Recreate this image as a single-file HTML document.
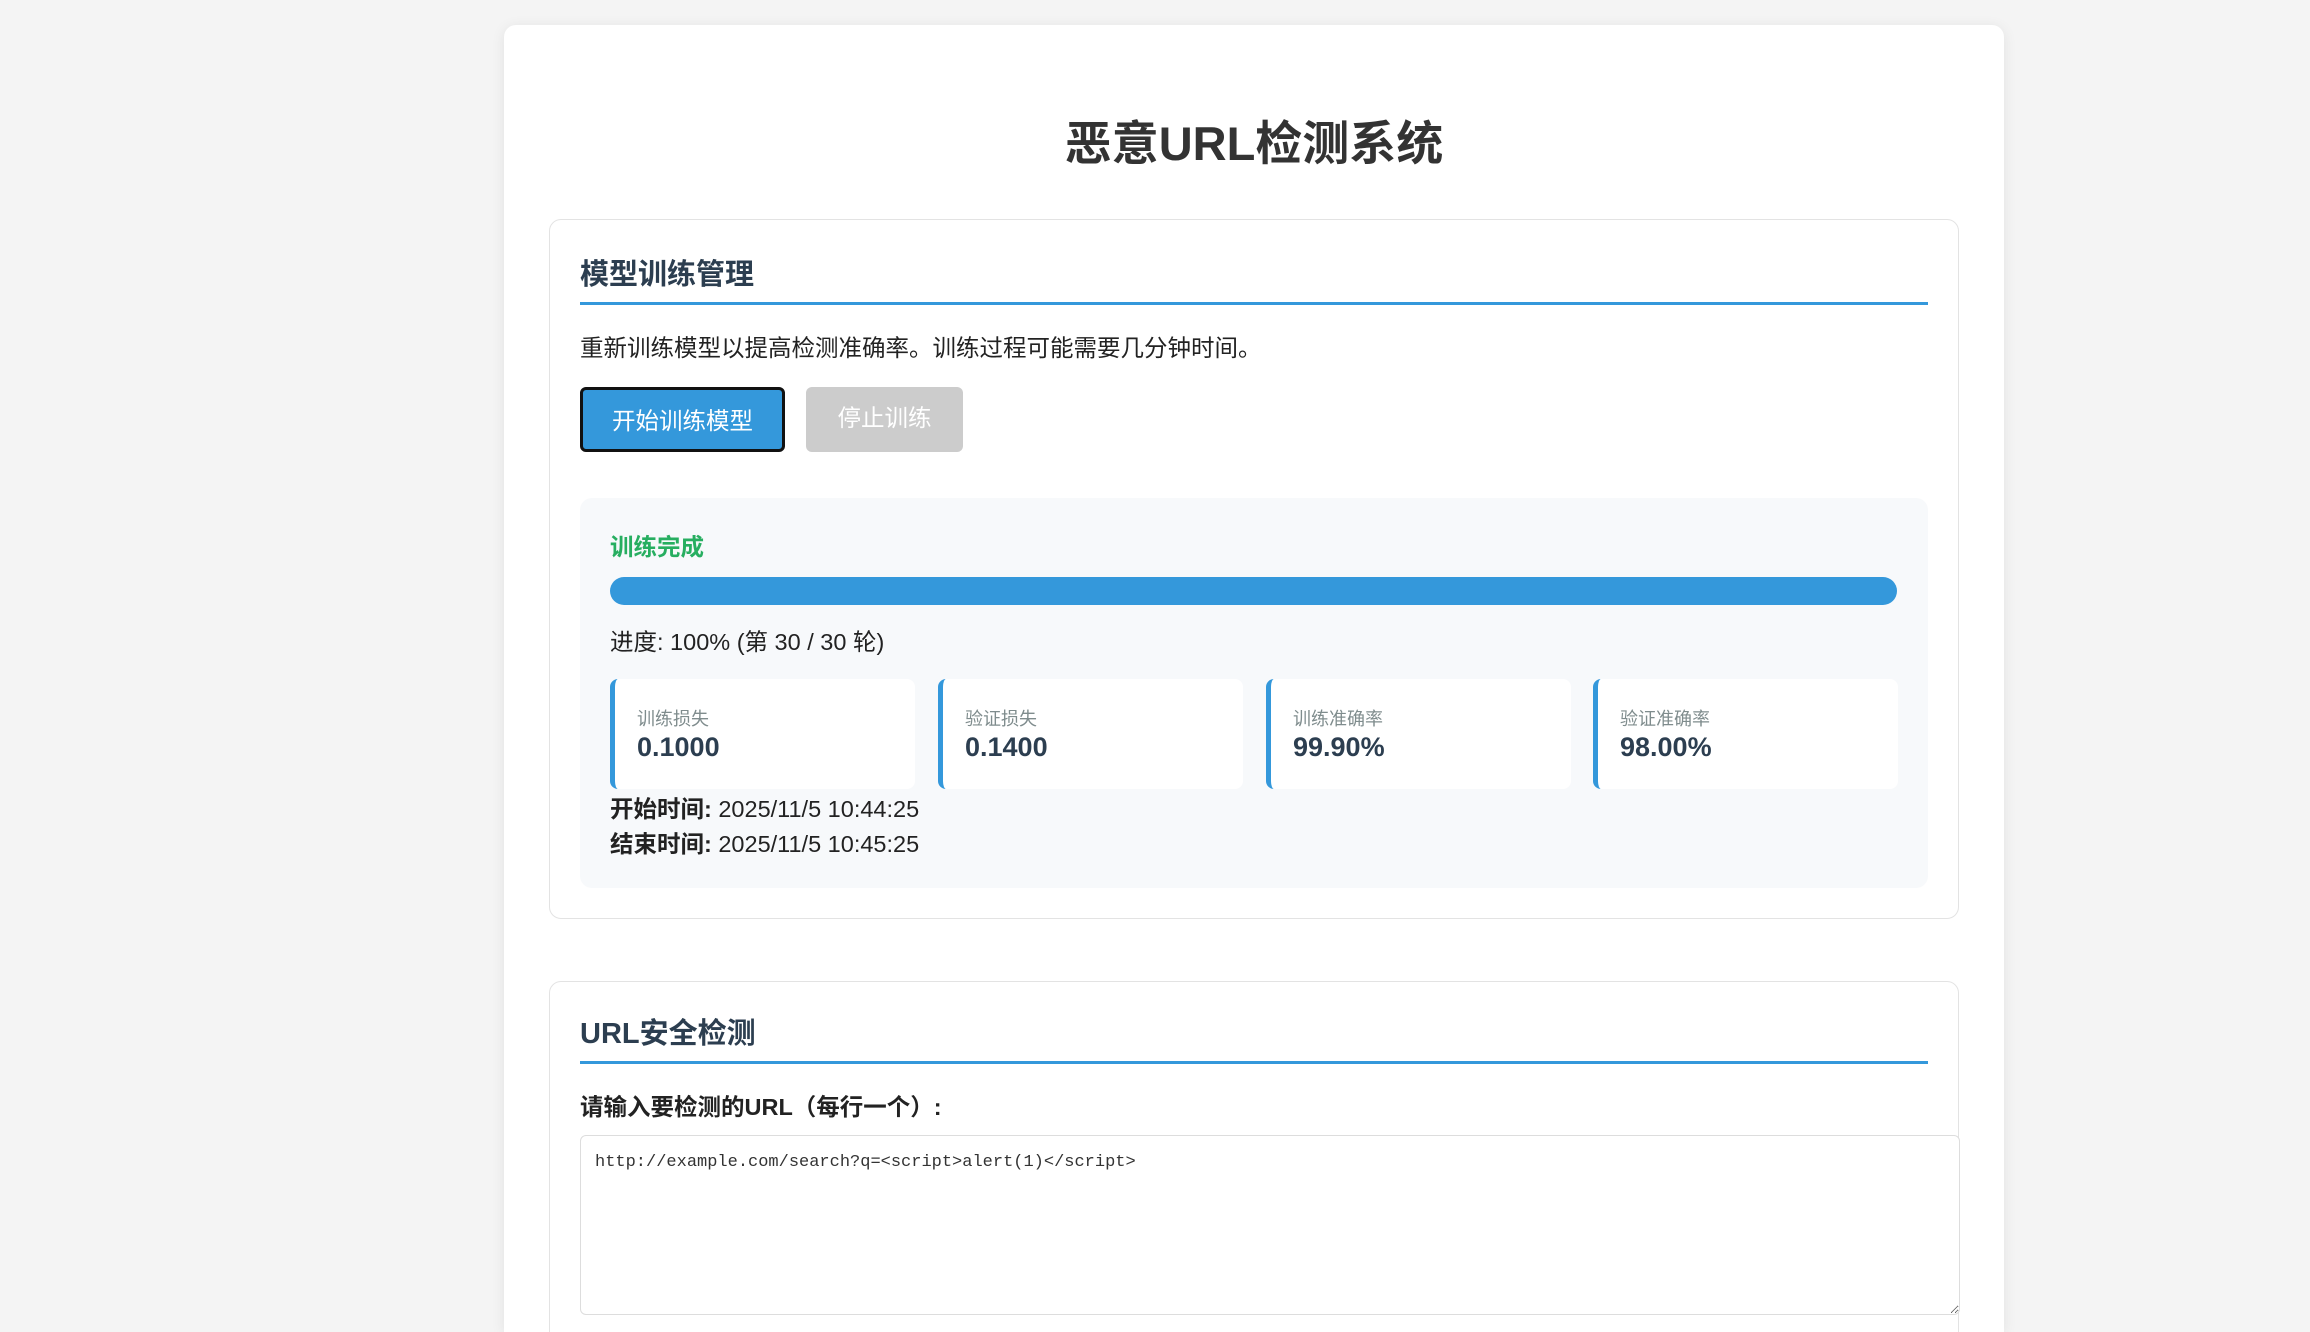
<!DOCTYPE html>
<html><head><meta charset="utf-8">
<style>
*{box-sizing:border-box;margin:0;padding:0}
html,body{width:2310px;height:1332px;overflow:hidden}
body{background:#f4f4f4;font-family:"Liberation Sans","Noto Sans CJK SC",sans-serif;color:#222;font-size:23.5px;position:relative}
.card{position:absolute;left:504px;top:25px;width:1500px;height:1307px;background:#fff;border-radius:12px 12px 0 0;box-shadow:0 2px 14px rgba(0,0,0,.08);overflow:hidden}
h1{position:absolute;left:0;width:100%;top:86px;text-align:center;font-size:47px;font-weight:bold;color:#333;line-height:66px}
.sec{position:absolute;left:45px;width:1410px;border:1.5px solid #e3e3e3;border-radius:12px;background:#fff}
.h2{position:absolute;left:30px;width:1348px;font-size:29px;font-weight:bold;color:#2c3e50;border-bottom:3px solid #3498db;line-height:40px;height:50px}
.abs{position:absolute;white-space:nowrap}
.btn{position:absolute;top:167px;height:65px;border-radius:6px;font-size:23.5px;line-height:63px;text-align:center;color:#fff}
.status{position:absolute;left:30px;top:278px;width:1348px;height:390px;background:#f7f9fb;border-radius:12px}
.bar{position:absolute;left:30px;top:79px;width:1287px;height:28px;border-radius:14px;background:#3498db}
.m{position:absolute;top:181px;width:305px;height:110px;background:#fff;border-left:5px solid #3498db;border-radius:8px}
.m .l{position:absolute;left:22px;top:26px;font-size:18px;color:#7f8c8d}
.m .v{position:absolute;left:22px;top:53px;font-size:27px;font-weight:bold;color:#2c3e50}
textarea{position:absolute;left:30px;top:153px;width:1380px;height:180px;border:1.5px solid #ddd;border-radius:6px;font-family:"Liberation Mono",monospace;font-size:17px;padding:17px 14px;color:#333;resize:both}
</style></head><body>
<div class="card">
<h1>恶意URL检测系统</h1>
<div class="sec" style="top:194px;height:700px">
 <div class="h2" style="top:35px">模型训练管理</div>
 <div class="abs" style="left:30px;top:110px;line-height:36px">重新训练模型以提高检测准确率。训练过程可能需要几分钟时间。</div>
 <div class="btn" style="left:30px;width:205px;background:#3498db;border:3px solid #111">开始训练模型</div>
 <div class="btn" style="left:256px;width:157px;background:#ccc">停止训练</div>
 <div class="status">
  <div class="abs" style="left:30px;top:31px;font-weight:bold;color:#27ae60;line-height:36px">训练完成</div>
  <div class="bar"></div>
  <div class="abs" style="left:30px;top:126px;line-height:36px">进度: 100% (第 30 / 30 轮)</div>
  <div class="m" style="left:30px"><div class="l">训练损失</div><div class="v">0.1000</div></div>
  <div class="m" style="left:358px"><div class="l">验证损失</div><div class="v">0.1400</div></div>
  <div class="m" style="left:686px"><div class="l">训练准确率</div><div class="v">99.90%</div></div>
  <div class="m" style="left:1013px"><div class="l">验证准确率</div><div class="v">98.00%</div></div>
  <div class="abs" style="left:30px;top:293px;line-height:36px"><b>开始时间:</b> 2025/11/5 10:44:25</div>
  <div class="abs" style="left:30px;top:328px;line-height:36px"><b>结束时间:</b> 2025/11/5 10:45:25</div>
 </div>
</div>
<div class="sec" style="top:956px;height:400px">
 <div class="h2" style="top:32px;height:50px">URL安全检测</div>
 <div class="abs" style="left:30px;top:107px;font-weight:bold;line-height:36px">请输入要检测的URL（每行一个）:</div>
 <textarea>http://example.com/search?q=&lt;script&gt;alert(1)&lt;/script&gt;</textarea>
</div>
</div>
</body></html>
